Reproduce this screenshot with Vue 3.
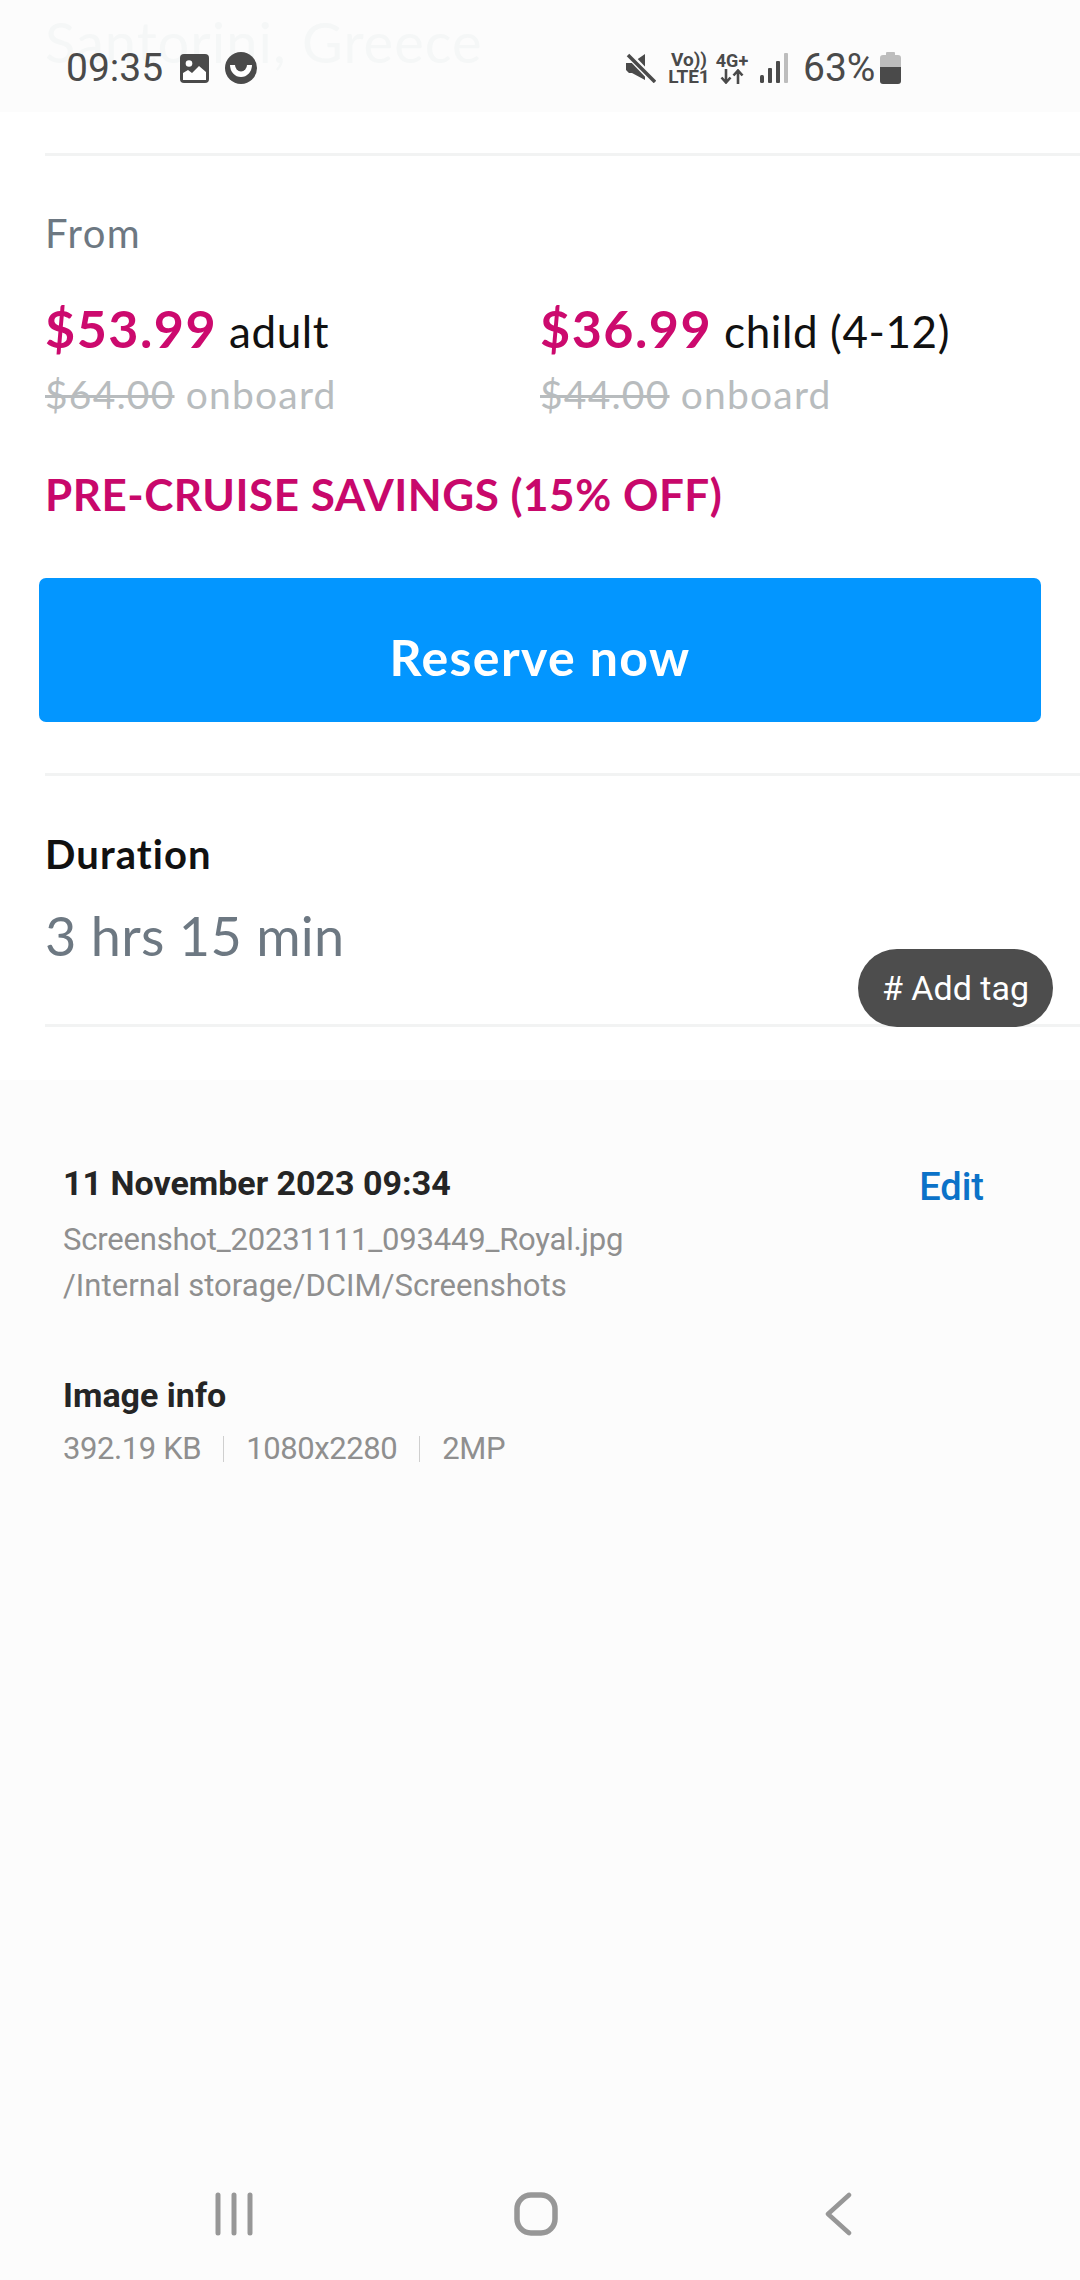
<template>
  <div class="page">
    <header class="status">
      <div class="ghost">Santorini, Greece</div>
      <span class="clock">09:35</span>
      <svg class="ic-image" width="29" height="29" viewBox="0 0 29 29">
        <rect width="29" height="29" rx="4" fill="#4a4a4a" />
        <circle cx="9" cy="9.500" r="3.300" fill="#fff" />
        <path d="M3 26V19l5 -3 4 3 7 -7 7 6v8z" fill="#fff" />
      </svg>
      <svg class="ic-face" width="32" height="32" viewBox="0 0 32 32">
        <circle cx="16" cy="16" r="16" fill="#4a4a4a" />
        <path d="M5 13h22a11 12 0 0 1 -22 0z" fill="#fff" />
        <path d="M10 13h12a6 6.500 0 0 1 -12 0z" fill="#4a4a4a" />
      </svg>
      <div class="status-right">
        <svg class="ic-mute" width="30" height="30" viewBox="0 0 30 30">
          <path d="M0 10h6l13 -9v26l-13 -7 h-3l-3 -3z" fill="#4a4a4a" />
          <path d="M2 1l27 28" stroke="#fcfcfc" stroke-width="7" />
          <path d="M2 2l27 27" stroke="#4a4a4a" stroke-width="3.500" />
        </svg>
        <div class="stack stack-lte">
          <span>Vo))</span>
          <span>LTE1</span>
        </div>
        <div class="stack stack-4g">
          <span>4G+</span>
          <svg width="24" height="15" viewBox="0 0 24 15">
            <path d="M6 0v13M1.500 8.500L6 13.500l4.500 -5M18 15V2M13.500 6.500L18 1.500l4.500 5" fill="none" stroke="#4a4a4a" stroke-width="2.600" />
          </svg>
        </div>
        <svg class="ic-signal" width="28" height="30" viewBox="0 0 28 30">
          <rect x="0" y="22" width="4" height="8" rx="1.500" fill="#4a4a4a" />
          <rect x="8" y="15" width="4" height="15" rx="1" fill="#4a4a4a" />
          <rect x="16" y="8" width="4" height="22" rx="1" fill="#4a4a4a" />
          <rect x="24" y="0" width="4" height="30" rx="1" fill="#bdbdbd" />
        </svg>
        <span class="percent">63%</span>
        <svg class="ic-batt" width="21" height="32" viewBox="0 0 21 32">
          <path d="M7 0h7a1 1 0 0 1 1 1v2h3a3 3 0 0 1 3 3v9H0V6a3 3 0 0 1 3 -3h3V1a1 1 0 0 1 1 -1z" fill="#bdbdbd" />
          <path d="M0 15h21v14a3 3 0 0 1 -3 3H3a3 3 0 0 1 -3 -3z" fill="#4a4a4a" />
        </svg>
      </div>
    </header>

    <main class="content">
      <div class="rule rule-top"></div>
      <div class="from">From</div>
      <div class="prices">
        <div class="price" v-for="p in prices" :key="p.now">
          <div class="now"><b>{{ p.now }}</b> {{ p.label }}</div>
          <div class="was"><s>{{ p.was }}</s> onboard</div>
        </div>
      </div>
      <div class="savings">PRE-CRUISE SAVINGS (15% OFF)</div>
      <button class="reserve">Reserve now</button>
      <div class="rule rule-mid"></div>
      <div class="dur-label">Duration</div>
      <div class="dur-value">3 hrs 15 min</div>
      <div class="rule rule-low"></div>
    </main>

    <div class="tag"># Add tag</div>

    <section class="sheet">
      <div class="file-head">
        <div class="date">11 November 2023 09:34</div>
        <a class="edit">Edit</a>
      </div>
      <div class="grey file-name">Screenshot_20231111_093449_Royal.jpg</div>
      <div class="grey file-path">/Internal storage/DCIM/Screenshots</div>
      <div class="info-title">Image info</div>
      <div class="grey meta">
        <span>392.19 KB</span>
        <i></i>
        <span>1080x2280</span>
        <i></i>
        <span>2MP</span>
      </div>
      <nav class="nav">
        <svg width="40" height="44" viewBox="0 0 40 44">
          <path d="M3 3v38M19 3v38M35 3v38" stroke="#979797" stroke-width="5" stroke-linecap="round" />
        </svg>
        <svg class="home" width="44" height="44" viewBox="0 0 44 44">
          <rect x="3" y="3" width="38" height="38" rx="14" fill="none" stroke="#979797" stroke-width="5.500" />
        </svg>
        <svg width="28" height="44" viewBox="0 0 28 44">
          <path d="M25 3L4 22l21 19" fill="none" stroke="#979797" stroke-width="4.500" stroke-linecap="round" stroke-linejoin="round" />
        </svg>
      </nav>
    </section>
  </div>
</template>

<script setup>
const prices = [
  { now: '$53.99', label: 'adult', was: '$64.00' },
  { now: '$36.99', label: 'child (4-12)', was: '$44.00' }
];
</script>

<style>
body {
  background: #fff;
}
</style>

<style scoped>
.page {
  position: relative;
  display: flex;
  flex-direction: column;
  width: 1080px;
  height: 2280px;
  overflow: hidden;
  background: #fff;
  font-family: Lato, "Liberation Sans", sans-serif;
}

/* status bar */
.status {
  position: relative;
  display: flex;
  align-items: center;
  height: 112px;
  padding: 24px 0 0 66px;
  box-sizing: border-box;
  background: #fcfcfc;
  font-family: Roboto, sans-serif;
  color: #4a4a4a;
}
.ghost {
  position: absolute;
  left: 45px;
  top: 8px;
  font-family: Lato, sans-serif;
  font-size: 56px;
  line-height: 68px;
  letter-spacing: 1px;
  color: #f5f7f7;
}
.clock {
  position: relative;
  font-size: 39px;
  line-height: 44px;
  width: 114px;
}
.ic-image {
  position: relative;
}
.ic-face {
  position: relative;
  margin-left: 16px;
}
.status-right {
  display: flex;
  align-items: center;
  margin-left: 369px;
}
.stack {
  display: flex;
  flex-direction: column;
  align-items: center;
  font-weight: 700;
  font-size: 19px;
  line-height: 17px;
}
.stack-lte {
  width: 40px;
  margin-left: 13px;
}
.stack-4g {
  width: 34px;
  margin-left: 6px;
  font-size: 18px;
}
.ic-signal {
  margin-left: 11px;
}
.percent {
  font-size: 39px;
  line-height: 44px;
  margin-left: 15px;
  width: 77px;
}
.ic-batt {
  margin-top: -1px;
}

/* content */
.content {
  display: flex;
  flex-direction: column;
  padding-left: 45px;
}
.rule {
  height: 3px;
  background: #f2f3f3;
}
.rule-top {
  margin-top: 41px;
}
.from {
  margin-top: 53px;
  font-size: 40px;
  line-height: 48px;
  letter-spacing: 1.5px;
  color: #6d7882;
}
.prices {
  display: flex;
  margin-top: 41px;
}
.price {
  width: 495px;
}
.now {
  font-size: 44px;
  line-height: 60px;
  letter-spacing: 0.6px;
  color: #111;
}
.now b {
  font-size: 52px;
  font-weight: 700;
  letter-spacing: 1.5px;
  color: #cc0a6e;
}
.was {
  margin-top: 10px;
  font-size: 39px;
  line-height: 46px;
  letter-spacing: 1.2px;
  color: #b8bcbe;
}
.was s {
  text-decoration-thickness: 3px;
}
.savings {
  margin-top: 51px;
  font-size: 44px;
  line-height: 52px;
  letter-spacing: 0.5px;
  font-weight: 700;
  color: #c8086b;
}
.reserve {
  display: block;
  width: 1002px;
  height: 144px;
  margin: 58px 0 0 -6px;
  padding: 14px 0 0;
  border: 0;
  border-radius: 7px;
  background: #0396ff;
  font-family: inherit;
  font-size: 50px;
  font-weight: 700;
  letter-spacing: 1.4px;
  color: #fff;
}
.rule-mid {
  margin-top: 51px;
}
.dur-label {
  margin-top: 54px;
  font-size: 40px;
  line-height: 48px;
  letter-spacing: 1.1px;
  font-weight: 700;
  color: #111;
}
.dur-value {
  margin-top: 26px;
  font-size: 54px;
  line-height: 64px;
  letter-spacing: 0.3px;
  color: #6d7882;
}
.rule-low {
  margin-top: 56px;
}

.tag {
  position: absolute;
  left: 858px;
  top: 949px;
  width: 195px;
  height: 78px;
  border-radius: 39px;
  background: #4d4d4d;
  color: #fff;
  font-family: Roboto, sans-serif;
  font-size: 34px;
  line-height: 78px;
  text-align: center;
}

/* details sheet */
.sheet {
  flex: 1;
  display: flex;
  flex-direction: column;
  margin-top: 53px;
  padding: 0 0 0 63px;
  background: #fcfcfc;
  font-family: Roboto, sans-serif;
}
.file-head {
  display: flex;
  justify-content: space-between;
  margin-top: 81px;
  padding-right: 96px;
}
.date, .info-title {
  font-size: 34px;
  line-height: 44px;
  font-weight: 700;
  color: #252525;
}
.edit {
  margin-top: 4px;
  font-size: 38px;
  line-height: 44px;
  font-weight: 500;
  color: #0b72c8;
}
.grey {
  font-size: 31px;
  line-height: 48px;
  letter-spacing: -0.2px;
  color: #8f8f8f;
}
.file-name {
  margin-top: 7px;
}
.file-path {
  margin-top: -2px;
  letter-spacing: 0.05px;
}
.info-title {
  margin-top: 63px;
}
.meta {
  display: flex;
  align-items: center;
  margin-top: 8px;
  letter-spacing: -0.4px;
}
.meta i {
  width: 1px;
  height: 26px;
  margin: 0 22px;
  background: #cfcfcf;
}
.nav {
  display: flex;
  justify-content: space-between;
  align-items: center;
  margin-top: auto;
  margin-bottom: 44px;
  padding: 0 228px 0 152px;
}
.home {
  margin-right: 8px;
}
</style>
